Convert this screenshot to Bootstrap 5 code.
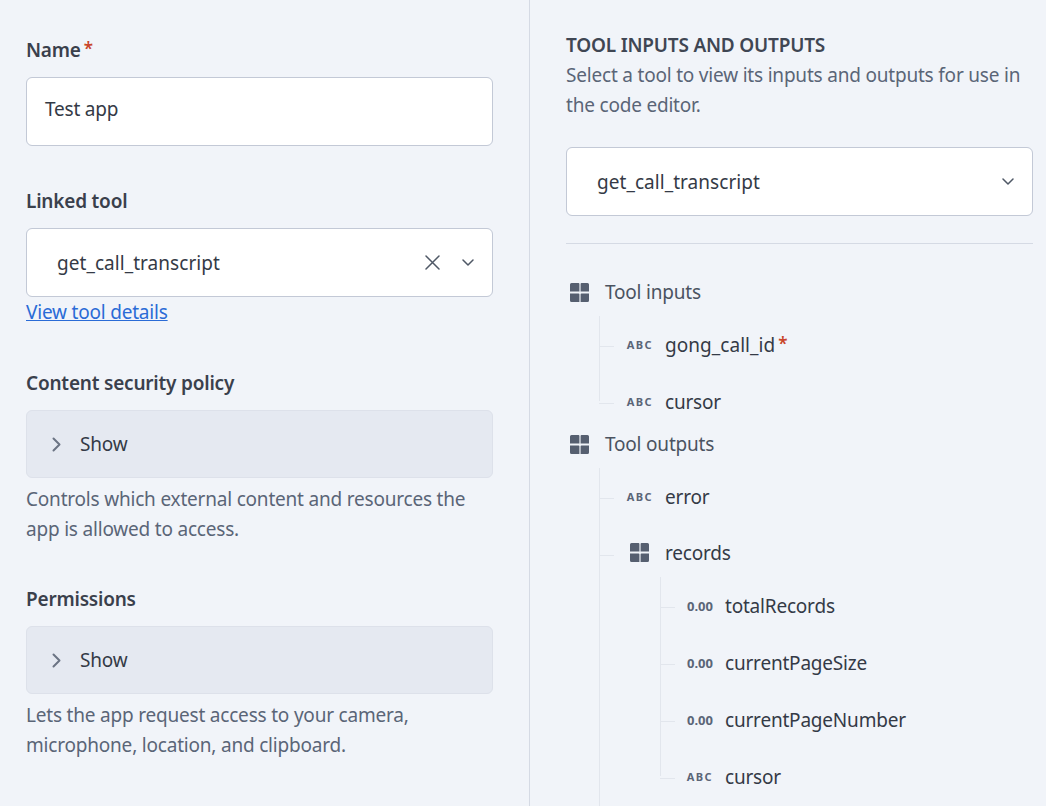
<!DOCTYPE html>
<html lang="en">

<head>
  <meta charset="UTF-8">
  <meta name="viewport" content="width=device-width, initial-scale=1.0">
  <title>Edit app</title>
  <link href="https://cdn.jsdelivr.net/npm/bootstrap@5.3.3/dist/css/bootstrap.min.css" rel="stylesheet">
  <style>
    html, body {
      height: 100%;
      overflow: hidden;
    }
    body {
      background: #f1f4f9;
      color: #343a46;
      font-family: "Noto Sans", sans-serif;
      font-size: 19px;
      line-height: 30px;
      letter-spacing: -0.2px;
    }
    .left-pane {
      width: 530px;
      flex: none;
      height: 806px;
      padding: 35px 36px 0 26px;
      border-right: 1px solid #d5dae4;
    }
    .right-pane {
      flex: 1;
      height: 806px;
      overflow: hidden;
      padding: 30px 13px 0 36px;
    }
    .field-label {
      display: block;
      font-weight: 600;
      color: #3a404c;
      margin: 0 0 12px;
    }
    .field-gap {
      margin-top: 40px;
    }
    .field-gap-wide {
      margin-top: 41px;
    }
    .req {
      color: #c9452a;
      font-size: 17px;
      font-weight: 600;
      margin-left: 3px;
      vertical-align: 2px;
      line-height: 1;
    }
    .snake-name {
      letter-spacing: 0.05px;
    }
    .field-box.form-control {
      height: 69px;
      padding: 0 18px;
      font-size: inherit;
      line-height: 30px;
      color: #343a46;
      border: 1px solid #c3c9d6;
      border-radius: 6px;
      display: flex;
      align-items: center;
    }
    .name-box.form-control {
      padding-bottom: 6px;
    }
    .select-box.form-control {
      padding: 0 18px 0 30px;
    }
    .clear-ico {
      margin-right: 22px;
    }
    .tool-link {
      color: #2a6bd6;
      display: block;
      width: fit-content;
    }
    .show-box {
      height: 68px;
      background: #e5e9f1;
      border: 1px solid #dde1ea;
      border-radius: 6px;
      padding: 0 0 0 25px;
      gap: 19px;
    }
    .hint {
      color: #5a6577;
      margin: 6px 0 0;
    }
    .section-title {
      font-size: 19px;
      line-height: 30px;
      font-weight: 600;
      color: #3f4653;
      margin: 0;
    }
    .section-hint {
      color: #5a6577;
      margin: 0 0 27px;
    }
    .divider {
      border: 0;
      border-top: 1px solid #d5dae4;
      opacity: 1;
      margin: 27px 0 33px;
    }
    .tree-head {
      height: 30px;
      margin-left: 4px;
      gap: 16px;
      color: #4b5361;
    }
    .tree-list {
      list-style: none;
      position: relative;
      margin: 9px 0 0 33px;
      padding: 0;
    }
    .tree-list::before {
      content: "";
      position: absolute;
      left: 0;
      top: 0;
      bottom: 29px;
      border-left: 1px solid #e2e6ed;
    }
    .tree-open::before {
      bottom: -60px;
    }
    .tree-list.tree-sub {
      margin: -5px 0 0 61px;
    }
    .tree-item {
      position: relative;
    }
    .tree-item::before {
      content: "";
      position: absolute;
      left: 0;
      top: 30px;
      width: 15px;
      border-top: 1px solid #e2e6ed;
    }
    .tree-row {
      height: 57px;
      padding-left: 23px;
      gap: 12px;
    }
    .tree-sub .tree-row {
      padding-left: 22px;
    }
    .group-row.tree-row {
      padding-bottom: 2px;
    }
    .type-tag {
      width: 31px;
      text-align: right;
      flex: none;
      font-size: 11px;
      font-weight: 700;
      color: #5a6577;
      letter-spacing: 1.4px;
    }
    .type-tag.num {
      letter-spacing: 0;
      font-size: 13px;
    }
    .grid-ico {
      flex: none;
      display: block;
    }
    .tree-row .grid-ico {
      margin: 0 4px 0 8px;
    }
    .tree-head + .tree-list + .tree-head {
      margin-top: -1px;
    }
  </style>
</head>

<body>
  <svg width="0" height="0" class="position-absolute">
    <symbol id="grid" viewBox="0 0 19 19">
      <path fill="#565f70" d="M1.5 0H8.500a.9.9 0 0 1 .9.9V8.600H0V1.500A1.500 1.500 0 0 1 1.500 0ZM10.600.9a.9.9 0 0 1 .9-.9h6a1.500 1.500 0 0 1 1.500 1.500V8.600H10.600ZM0 10.400H8.600a.8.8 0 0 1 .8.8V19H1.500A1.500 1.500 0 0 1 0 17.500ZM10.600 11.200a.8.8 0 0 1 .8-.8H19v7.100a1.500 1.500 0 0 1-1.500 1.500H10.600Z"/>
    </symbol>
    <symbol id="chev" viewBox="0 0 12 7">
      <path fill="none" stroke="#4f5866" stroke-width="1.500" stroke-linecap="round" stroke-linejoin="round" d="M1 1l5 5 5-5"/>
    </symbol>
  </svg>

  <div class="d-flex">
    <div class="left-pane">
      <label class="field-label">Name<span class="req">*</span></label>
      <div class="form-control field-box name-box">Test app</div>

      <label class="field-label field-gap">Linked tool</label>
      <div class="form-control field-box select-box">
        <span class="flex-grow-1 snake-name">get_call_transcript</span>
        <svg class="clear-ico" width="15" height="15" viewBox="0 0 15 15"><path fill="none" stroke="#4f5866" stroke-width="1.500" stroke-linecap="round" d="M1 1l13 13M14 1L1 14"/></svg>
        <svg width="12" height="7"><use href="#chev"/></svg>
      </div>
      <a href="#" class="tool-link">View tool details</a>

      <label class="field-label field-gap-wide">Content security policy</label>
      <div class="show-box d-flex align-items-center">
        <svg width="9" height="15" viewBox="0 0 9 15"><path fill="none" stroke="#6b7484" stroke-width="2" stroke-linecap="round" stroke-linejoin="round" d="M1.500 1.500l6 6-6 6"/></svg>
        <span>Show</span>
      </div>
      <p class="hint">Controls which external content and resources the app is allowed to access.</p>

      <label class="field-label field-gap">Permissions</label>
      <div class="show-box d-flex align-items-center">
        <svg width="9" height="15" viewBox="0 0 9 15"><path fill="none" stroke="#6b7484" stroke-width="2" stroke-linecap="round" stroke-linejoin="round" d="M1.500 1.500l6 6-6 6"/></svg>
        <span>Show</span>
      </div>
      <p class="hint">Lets the app request access to your camera, microphone, location, and clipboard.</p>
    </div>

    <div class="right-pane">
      <h6 class="section-title">TOOL INPUTS AND OUTPUTS</h6>
      <p class="section-hint">Select a tool to view its inputs and outputs for use in the code editor.</p>
      <div class="form-control field-box select-box">
        <span class="flex-grow-1 snake-name">get_call_transcript</span>
        <svg width="12" height="7"><use href="#chev"/></svg>
      </div>
      <hr class="divider">

      <div class="tree-head d-flex align-items-center">
        <svg class="grid-ico" width="19" height="19"><use href="#grid"/></svg>
        <span>Tool inputs</span>
      </div>
      <ul class="tree-list">
        <li class="tree-item">
          <div class="tree-row d-flex align-items-center"><span class="type-tag">ABC</span><span><span class="snake-name">gong_call_id</span><span class="req">*</span></span></div>
        </li>
        <li class="tree-item">
          <div class="tree-row d-flex align-items-center"><span class="type-tag">ABC</span><span>cursor</span></div>
        </li>
      </ul>

      <div class="tree-head d-flex align-items-center">
        <svg class="grid-ico" width="19" height="19"><use href="#grid"/></svg>
        <span>Tool outputs</span>
      </div>
      <ul class="tree-list tree-open">
        <li class="tree-item">
          <div class="tree-row d-flex align-items-center"><span class="type-tag">ABC</span><span>error</span></div>
        </li>
        <li class="tree-item">
          <div class="tree-row group-row d-flex align-items-center">
            <svg class="grid-ico" width="19" height="19"><use href="#grid"/></svg>
            <span>records</span>
          </div>
          <ul class="tree-list tree-sub">
            <li class="tree-item">
              <div class="tree-row d-flex align-items-center"><span class="type-tag num">0.00</span><span>totalRecords</span></div>
            </li>
            <li class="tree-item">
              <div class="tree-row d-flex align-items-center"><span class="type-tag num">0.00</span><span>currentPageSize</span></div>
            </li>
            <li class="tree-item">
              <div class="tree-row d-flex align-items-center"><span class="type-tag num">0.00</span><span>currentPageNumber</span></div>
            </li>
            <li class="tree-item">
              <div class="tree-row d-flex align-items-center"><span class="type-tag">ABC</span><span>cursor</span></div>
            </li>
          </ul>
        </li>
      </ul>
    </div>
  </div>

  <script src="https://cdn.jsdelivr.net/npm/bootstrap@5.3.3/dist/js/bootstrap.bundle.min.js"></script>
</body>

</html>
